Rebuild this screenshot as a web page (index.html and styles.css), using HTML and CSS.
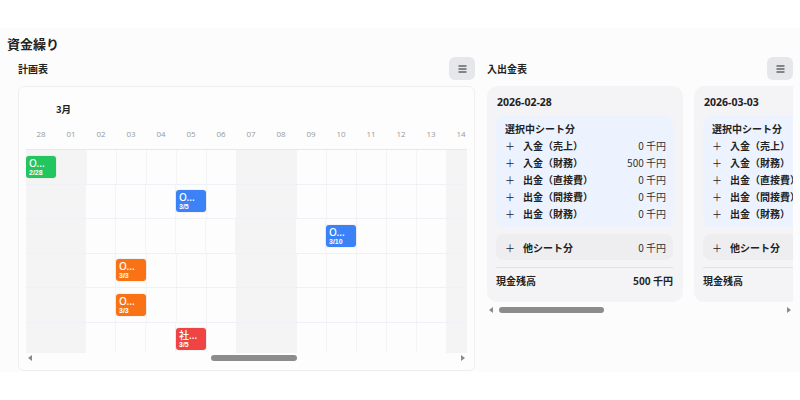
FILE: index.html
```html
<!DOCTYPE html>
<html lang="ja">
<head>
    <meta charset="UTF-8">
    <title>資金繰り</title>
    <link rel="stylesheet" href="styles.css">
</head>
<body>
    <div class="page">
        <h1 class="page-title">資金繰り</h1>

        <div class="boards">
            <section class="plan">
                <div class="section-head">
                    <h2>計画表</h2>
                    <button class="menu-btn" aria-label="menu">
                        <svg width="9" height="8" viewBox="0 0 9 8"><path d="M0.5 1h8M0.5 4h8M0.5 7h8" stroke="#222" stroke-width="1.2"/></svg>
                    </button>
                </div>
                <div class="plan-card">
                    <div class="month-row"><span>3月</span></div>
                    <div class="day-row" id="day-row"></div>
                    <div class="grid-body" id="grid-body"></div>
                    <div class="fake-scroll">
                        <span class="arrow left"></span>
                        <span class="thumb plan-thumb"></span>
                        <span class="arrow right"></span>
                    </div>
                </div>
            </section>

            <section class="flow">
                <div class="section-head">
                    <h2>入出金表</h2>
                    <button class="menu-btn" aria-label="menu">
                        <svg width="9" height="8" viewBox="0 0 9 8"><path d="M0.5 1h8M0.5 4h8M0.5 7h8" stroke="#222" stroke-width="1.2"/></svg>
                    </button>
                </div>
                <div class="flow-cards">
                    <div class="day-card">
                        <div class="day-date">2026-02-28</div>
                        <div class="own-box">
                            <div class="box-title">選択中シート分</div>
                            <div class="line"><span class="plus">＋</span><span class="label">入金（売上）</span><span class="val">0 千円</span></div>
                            <div class="line"><span class="plus">＋</span><span class="label">入金（財務）</span><span class="val">500 千円</span></div>
                            <div class="line"><span class="plus">＋</span><span class="label">出金（直接費）</span><span class="val">0 千円</span></div>
                            <div class="line"><span class="plus">＋</span><span class="label">出金（間接費）</span><span class="val">0 千円</span></div>
                            <div class="line"><span class="plus">＋</span><span class="label">出金（財務）</span><span class="val">0 千円</span></div>
                        </div>
                        <div class="other-box">
                            <div class="line"><span class="plus">＋</span><span class="label">他シート分</span><span class="val">0 千円</span></div>
                        </div>
                        <div class="balance"><span>現金残高</span><span>500 千円</span></div>
                    </div>
                    <div class="day-card">
                        <div class="day-date">2026-03-03</div>
                        <div class="own-box">
                            <div class="box-title">選択中シート分</div>
                            <div class="line"><span class="plus">＋</span><span class="label">入金（売上）</span><span class="val">0 千円</span></div>
                            <div class="line"><span class="plus">＋</span><span class="label">入金（財務）</span><span class="val">0 千円</span></div>
                            <div class="line"><span class="plus">＋</span><span class="label">出金（直接費）</span><span class="val">0 千円</span></div>
                            <div class="line"><span class="plus">＋</span><span class="label">出金（間接費）</span><span class="val">0 千円</span></div>
                            <div class="line"><span class="plus">＋</span><span class="label">出金（財務）</span><span class="val">0 千円</span></div>
                        </div>
                        <div class="other-box">
                            <div class="line"><span class="plus">＋</span><span class="label">他シート分</span><span class="val">0 千円</span></div>
                        </div>
                        <div class="balance"><span>現金残高</span><span>500 千円</span></div>
                    </div>
                </div>
                <div class="fake-scroll">
                    <span class="arrow left"></span>
                    <span class="thumb flow-thumb"></span>
                    <span class="arrow right"></span>
                </div>
            </section>
        </div>
    </div>

    <script>
        // columns shown in the planning grid
        const days = ['28', '01', '02', '03', '04', '05', '06', '07', '08', '09', '10', '11', '12', '13', '14'];
        const weekend = [0, 1, 7, 8, 14];

        // one chip per row: column index, colour, title, date
        const chips = [
            { col: 0, color: 'green', title: 'O...', date: '2/28' },
            { col: 5, color: 'blue', title: 'O...', date: '3/5' },
            { col: 10, color: 'blue', title: 'O...', date: '3/10' },
            { col: 3, color: 'orange', title: 'O...', date: '3/3' },
            { col: 3, color: 'orange', title: 'O...', date: '3/3' },
            { col: 5, color: 'red', title: '社...', date: '3/5' }
        ];

        const dayRow = document.getElementById('day-row');
        days.forEach(function (d) {
            const cell = document.createElement('div');
            cell.className = 'day-cell';
            cell.textContent = d;
            dayRow.appendChild(cell);
        });

        const body = document.getElementById('grid-body');
        chips.forEach(function (chip) {
            const row = document.createElement('div');
            row.className = 'grid-row';
            days.forEach(function (d, i) {
                const cell = document.createElement('div');
                cell.className = 'grid-cell';
                if (weekend.includes(i)) cell.classList.add('weekend');
                if (i === chip.col) {
                    const c = document.createElement('div');
                    c.className = 'chip ' + chip.color;
                    c.innerHTML = '<span class="chip-title">' + chip.title + '</span><span class="chip-date">' + chip.date + '</span>';
                    cell.appendChild(c);
                }
                row.appendChild(cell);
            });
            body.appendChild(row);
        });
    </script>
</body>
</html>
```

FILE: styles.css
```css
body {
    margin: 0;
    background-color: #fff;
    font-family: "Noto Sans CJK JP", "Noto Sans", sans-serif;
    color: #222;
}

.page {
    margin-top: 28px;
    height: 344px;
    background-color: #fcfcfc;
    padding: 8px 7px 0;
    box-sizing: border-box;
}

.page-title {
    margin: 0;
    font-size: 13px;
    line-height: 16px;
    font-weight: 700;
}

.boards {
    display: flex;
    gap: 12px;
    padding-left: 11px;
    margin-top: 5px;
}

.plan {
    width: 457px;
}

.flow {
    width: 306px;
}

.section-head {
    display: flex;
    justify-content: space-between;
    align-items: center;
    height: 23px;
    margin-bottom: 6px;
}

.section-head h2 {
    margin: 0;
    font-size: 10px;
    font-weight: 700;
}

.menu-btn {
    width: 26px;
    height: 23px;
    border: none;
    border-radius: 6px;
    background-color: #e6e7ea;
    display: flex;
    align-items: center;
    justify-content: center;
    padding: 0;
}

/* planning grid */
.plan-card {
    height: 285px;
    border: 1px solid #efefef;
    border-radius: 6px;
    background-color: #fdfdfd;
    padding: 13px 7px 0;
    box-sizing: border-box;
    overflow: hidden;
}

.month-row {
    height: 18px;
    padding-left: 30px;
    font-size: 9.5px;
    font-weight: 700;
    line-height: 18px;
}

.day-row {
    display: flex;
    height: 31px;
    border-bottom: 1px solid #e8e8ea;
    overflow: hidden;
}

.day-cell {
    flex: 0 0 30px;
    text-align: center;
    line-height: 31px;
    font-size: 8px;
    color: #999;
    font-family: "Open Sans", sans-serif;
}

.grid-body {
    height: 203px;
    overflow: hidden;
}

.grid-row {
    display: flex;
    height: 34.5px;
    border-bottom: 1px solid #eef1f5;
    box-sizing: border-box;
}

.grid-cell {
    flex: 0 0 30px;
    border-right: 1px solid #f4f4f4;
    box-sizing: border-box;
    display: flex;
    align-items: center;
}

.grid-cell.weekend {
    background-color: #f4f4f5;
    border-right-color: #f4f4f5;
}

.chip {
    width: 30px;
    height: 22px;
    border-radius: 3px;
    color: #fff;
    padding: 2px 3px 1px;
    box-sizing: border-box;
    display: flex;
    flex-direction: column;
    position: relative;
    z-index: 1;
    box-shadow: 0 0 0 1px rgba(0, 0, 0, 0.04);
    overflow: hidden;
}

.chip-title {
    font-size: 10px;
    line-height: 11px;
    font-weight: 500;
    font-family: "Noto Sans", "Noto Sans CJK JP", sans-serif;
}

.chip-date {
    font-size: 7px;
    line-height: 8px;
    font-weight: 700;
    font-family: "Liberation Sans", sans-serif;
}

.green { background-color: #22c55e; }
.blue { background-color: #3b82f6; }
.orange { background-color: #f97316; }
.red { background-color: #ef4444; }

.fake-scroll {
    position: relative;
    height: 10px;
}

.fake-scroll .arrow {
    position: absolute;
    top: 2px;
    width: 0;
    height: 0;
    border-top: 3px solid transparent;
    border-bottom: 3px solid transparent;
}

.fake-scroll .arrow.left {
    left: 2px;
    border-right: 4px solid #8a8a8a;
}

.fake-scroll .arrow.right {
    right: 2px;
    border-left: 4px solid #8a8a8a;
}

.fake-scroll .thumb {
    position: absolute;
    top: 2px;
    height: 6px;
    border-radius: 3px;
    background-color: #8c8c8c;
}

.plan-thumb {
    left: 185px;
    width: 86px;
}

.flow-thumb {
    left: 12px;
    width: 105px;
}

/* cash flow cards */
.flow-cards {
    display: flex;
    gap: 11px;
    overflow: hidden;
    height: 216px;
    margin-bottom: 3px;
}

.day-card {
    flex: 0 0 196px;
    background-color: #f4f4f6;
    border-radius: 10px;
    padding: 9px 10px 0 9px;
    box-sizing: border-box;
    font-size: 10px;
}

.day-date {
    font-weight: 700;
    font-size: 10.5px;
    line-height: 14px;
    margin-left: 1px;
    font-family: "Noto Sans", sans-serif;
}

.own-box {
    margin-top: 7px;
    background-color: #edf3fe;
    border-radius: 8px;
    padding: 5px 7px 5px 9px;
}

.box-title {
    font-weight: 600;
    line-height: 16px;
}

.line {
    display: flex;
    align-items: center;
    height: 17px;
    font-weight: 600;
}

.plus {
    width: 18px;
    font-weight: 400;
}

.label {
    flex: 1;
}

.val {
    font-weight: 400;
    color: #333;
}

.other-box {
    margin-top: 7px;
    background-color: #eeeef0;
    border-radius: 8px;
    padding: 5px 7px 4px 9px;
}

.balance {
    margin-top: 7px;
    border-top: 1px solid #e2e2e4;
    display: flex;
    justify-content: space-between;
    padding-top: 5px;
    font-weight: 700;
    line-height: 16px;
}
```
